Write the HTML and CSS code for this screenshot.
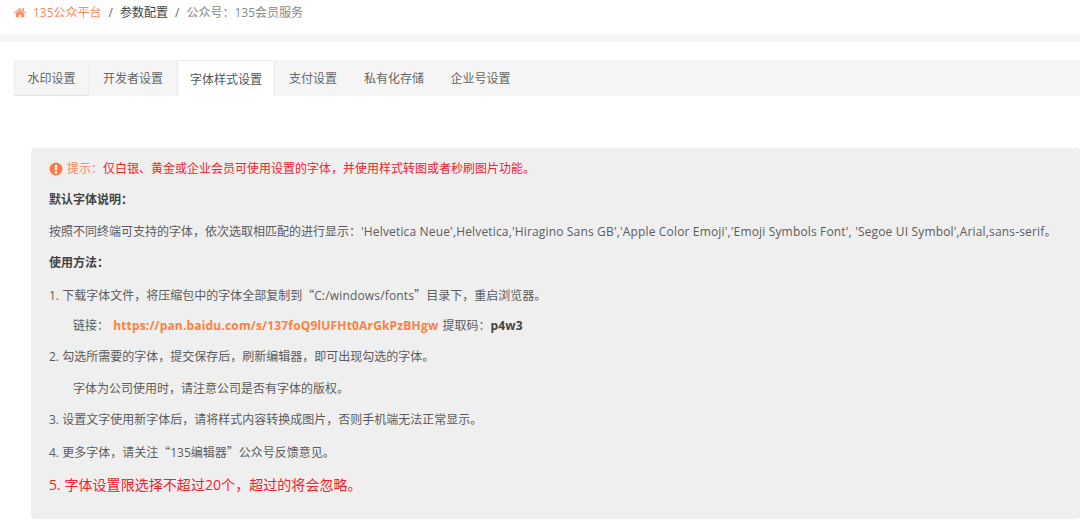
FILE: index.html
```html
<!DOCTYPE html>
<html lang="zh-CN">
<head>
<meta charset="utf-8">
<title>参数配置</title>
<link rel="stylesheet" href="styles.css">
</head>
<body>
<nav class="crumbs">
  <svg class="home" viewBox="0 0 16 14" width="12" height="11"><path d="M8 .6 0 7.4l.9 1L8 2.5l7.1 5.9.9-1-2.6-2.2V1.3h-2v3.2zM8 3.7 2.4 8.4v5h4v-3.6h3.2v3.6h4v-5z" fill="#ff8a5c"/></svg>
  <a class="crumb-link">135公众平台</a>
  <span class="sep">/</span>
  <span class="crumb-mid">参数配置</span>
  <span class="sep">/</span>
  <span class="crumb-last">公众号：135会员服务</span>
</nav>
<div class="band"></div>
<div class="tabs">
  <div class="tab first">水印设置</div>
  <div class="tab t2">开发者设置</div>
  <div class="tab active">字体样式设置</div>
  <div class="tab t4">支付设置</div>
  <div class="tab t5">私有化存储</div>
  <div class="tab t6">企业号设置</div>
</div>
<section class="card">
  <p class="line tip"><svg class="warn" viewBox="0 0 14 14" width="14" height="14"><circle cx="7" cy="7" r="6.5" fill="#ff7a45"/><rect x="5.9" y="2.8" width="2.2" height="5.6" rx=".8" fill="#fff"/><circle cx="7" cy="10.4" r="1.2" fill="#fff"/></svg><span class="tip-label">提示：</span><span class="red">仅白银、黄金或企业会员可使用设置的字体，并使用样式转图或者秒刷图片功能。</span></p>
  <p class="line"><b>默认字体说明：</b></p>
  <p class="line">按照不同终端可支持的字体，依次选取相匹配的进行显示：<span class="latin">'Helvetica Neue',Helvetica,'Hiragino Sans GB','Apple Color Emoji','Emoji Symbols Font', 'Segoe UI Symbol',Arial,sans-serif</span>。</p>
  <p class="line"><b>使用方法：</b></p>
  <p class="line">1. 下载字体文件，将压缩包中的字体全部复制到<span class="quote">“</span><span class="latin">C:/windows/fonts</span><span class="quote">”</span>目录下，重启浏览器。</p>
  <p class="line indent">链接： <a class="link">https://pan.baidu.com/s/137foQ9lUFHt0ArGkPzBHgw</a> 提取码：<b class="code">p4w3</b></p>
  <p class="line">2. 勾选所需要的字体，提交保存后，刷新编辑器，即可出现勾选的字体。</p>
  <p class="line indent">字体为公司使用时，请注意公司是否有字体的版权。</p>
  <p class="line">3. 设置文字使用新字体后，请将样式内容转换成图片，否则手机端无法正常显示。</p>
  <p class="line">4. 更多字体，请关注<span class="quote">“</span>135编辑器<span class="quote">”</span>公众号反馈意见。</p>
  <p class="line big">5. 字体设置限选择不超过20个，超过的将会忽略。</p>
</section>
</body>
</html>
```
FILE: styles.css
```css
* { box-sizing: border-box; }
html, body { margin: 0; padding: 0; }
body {
  width: 1080px;
  height: 520px;
  overflow: hidden;
  background: #fff;
  color: #5c5c5c;
  font-family: "Open Sans", "Noto Sans CJK SC", sans-serif;
  font-size: 12px;
}
.crumbs {
  height: 34px;
  padding: 0 0 9px 14px;
  display: flex;
  align-items: center;
  line-height: 20px;
}
.home { margin-right: 7px; }
.crumb-link { color: #ff8a5c; }
.sep { margin: 0 7px; color: #666; }
.crumb-mid { color: #444; }
.crumb-last { color: #888; }
.band { height: 8px; background: #f6f6f7; }
.tabs {
  margin: 18px 0 0 14px;
  height: 36px;
  display: flex;
  background: #f5f5f5;
  color: #666;
}
.tab { height: 36px; line-height: 37px; text-align: center; }
.first { width: 75px; border: 1px solid #eee; border-bottom-color: #e4e4e4; border-top: 0; }
.t2 { width: 88px; }
.active { width: 98px; background: #fff; border: 1px solid #e9e9e9; border-bottom: 0; border-radius: 2px 2px 0 0; color: #555; }
.t4 { width: 76px; }
.t5 { width: 86px; }
.t6 { width: 87px; }
.card {
  margin: 52px 0 0 31px;
  height: 371px;
  padding: 5px 0 0 18px;
  background: #efefef;
  border-radius: 4px;
}
.line { margin: 0; height: 31.4px; line-height: 31.4px; white-space: nowrap; }
.line b { color: #444; font-weight: 700; }
.tip { display: flex; align-items: center; }
.warn { margin-right: 4px; }
.tip-label { color: #ff8a5c; }
.red { color: #f5222d; }
.latin { letter-spacing: .16px; }
.quote { font-family: "Noto Sans CJK SC", sans-serif; }
.indent { padding-left: 24px; }
.link { color: #ff8040; font-weight: 700; margin: 0 1px 0 1px; letter-spacing: .17px; }
.code { margin-left: 0; letter-spacing: .2px; }
.big { font-size: 14px; letter-spacing: .05px; color: #f5222d; margin-top: 2px; }
```
